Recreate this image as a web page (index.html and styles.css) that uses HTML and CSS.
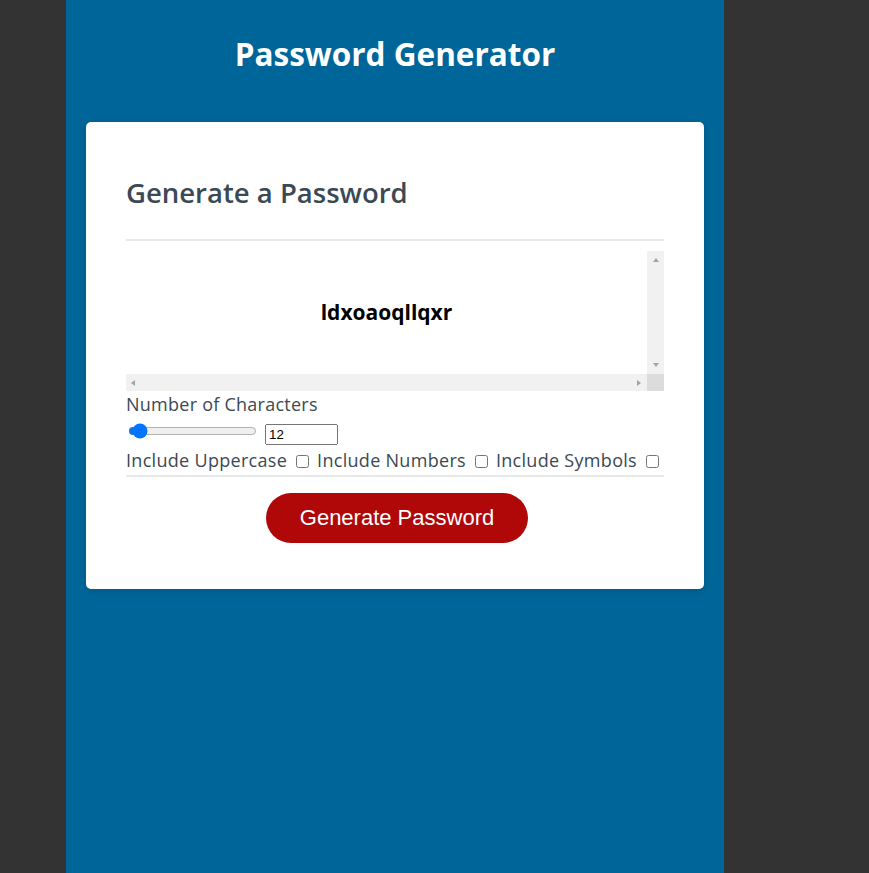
FILE: index.html
```html
<!DOCTYPE html>
<html lang="en">
<head>
<meta charset="UTF-8">
<title>Password Generator</title>
<link rel="stylesheet" href="styles.css">
</head>
<body>
<div class="wrapper">
  <header class="header">
    <h1 class="title">Password Generator</h1>
  </header>
  <div class="card">
    <div class="card-header">
      <h2 class="card-title">Generate a Password</h2>
    </div>
    <div class="card-body">
      <div class="output">
        <textarea class="password" readonly aria-label="Generated Password">ldxoaoqllqxr</textarea>
        <div class="vbar"><span class="arrow arrow-up"></span><span class="arrow arrow-down"></span></div>
        <div class="hbar"><span class="arrow arrow-left"></span><span class="arrow arrow-right"></span></div>
        <div class="corner"></div>
      </div>
      <div class="field-label">Number of Characters</div>
      <div class="slider-row">
        <input class="range" type="range" min="8" max="128" value="12">
        <input class="number" type="number" min="8" max="128" value="12">
      </div>
      <div class="check-row">Include Uppercase <input type="checkbox" class="check"> Include Numbers <input type="checkbox" class="check"> Include Symbols <input type="checkbox" class="check"></div>
    </div>
    <div class="card-footer">
      <button class="btn" type="button">Generate Password</button>
    </div>
  </div>
</div>
</body>
</html>
```
FILE: styles.css
```css
*, *::before, *::after { box-sizing: border-box; }

html, body {
  margin: 0;
  padding: 0;
  height: 100%;
}

body {
  background-color: #333333;
  font-family: "Open Sans", "Noto Sans", sans-serif;
}

.wrapper {
  margin-left: 66px;
  width: 658px;
  min-height: 100%;
  background-color: #006699;
  padding: 34px 20px 0 20px;
}

.header {
  text-align: center;
  color: #ffffff;
  height: 88px;
}

.title {
  margin: 0;
  font-size: 31.5px;
  line-height: 40px;
  font-weight: 700;
}

.card {
  background-color: #ffffff;
  border-radius: 5px;
  box-shadow: rgba(0, 0, 0, 0.15) 0 2px 8px 0;
  color: #3b4954;
  font-size: 18px;
  padding: 30px 40px;
}

.card-title {
  margin: 0;
  padding-top: 22px;
  font-size: 27.5px;
  line-height: 38px;
  font-weight: 600;
  height: 87px;
}

.card-header::after {
  content: "";
  display: block;
  height: 2px;
  background: #e7e9eb;
}

.output {
  margin-top: 10px;
  display: grid;
  grid-template-columns: 1fr 17px;
  grid-template-rows: 123px 17px;
}

.password {
  appearance: none;
  border: none;
  outline: none;
  resize: none;
  overflow: hidden;
  width: 100%;
  height: 123px;
  margin: 0;
  padding: 47px 15px 0 15px;
  font-family: "Open Sans", "Noto Sans", sans-serif;
  font-size: 21px;
  font-weight: 700;
  line-height: 28px;
  text-align: center;
  color: #000000;
  background: #ffffff;
}

.vbar, .hbar {
  background: #f1f1f1;
  display: flex;
  justify-content: space-between;
  align-items: center;
}

.vbar {
  flex-direction: column;
  padding: 7px 0 7px 0;
}

.hbar {
  padding: 0 6px 0 5px;
}

.corner {
  background: #dcdcdc;
}

.arrow {
  width: 0;
  height: 0;
  border-style: solid;
  border-color: transparent;
}

.arrow-up {
  border-width: 0 3.5px 4px 3.5px;
  border-bottom-color: #a3a3a3;
}

.arrow-down {
  border-width: 4px 3.5px 0 3.5px;
  border-top-color: #a3a3a3;
}

.arrow-left {
  border-width: 3.5px 4px 3.5px 0;
  border-right-color: #a3a3a3;
}

.arrow-right {
  border-width: 3.5px 0 3.5px 4px;
  border-left-color: #a3a3a3;
}

.field-label {
  line-height: 24px;
  padding-top: 1px;
  height: 24px;
  letter-spacing: 0.25px;
}

.slider-row {
  display: flex;
  align-items: flex-start;
  height: 32px;
}

.range {
  margin: 8px 8px 0 2px;
  width: 129px;
  height: 16px;
}

.number {
  margin: 9px 0 0 0;
  width: 73px;
  height: 21px;
  font-family: "Liberation Sans", Arial, sans-serif;
  font-size: 13.33px;
}

.check-row {
  line-height: 24px;
  padding-top: 1px;
  height: 25px;
  white-space: nowrap;
  letter-spacing: 0.3px;
}

.check {
  margin: 3px 3px 3px 4px;
  width: 13px;
  height: 13px;
  vertical-align: -1px;
}

.card-footer {
  text-align: center;
}

.card-footer::before {
  content: "";
  display: block;
  height: 2px;
  margin-top: 3px;
  background: #e7e9eb;
}

.btn {
  border: none;
  background-color: #b00709;
  border-radius: 25px;
  color: #ffffff;
  display: inline-block;
  font-family: "Liberation Sans", Arial, sans-serif;
  font-size: 22px;
  line-height: 22px;
  margin: 16px 0 16px 4px;
  padding: 14px 34px;
  cursor: pointer;
}
```
